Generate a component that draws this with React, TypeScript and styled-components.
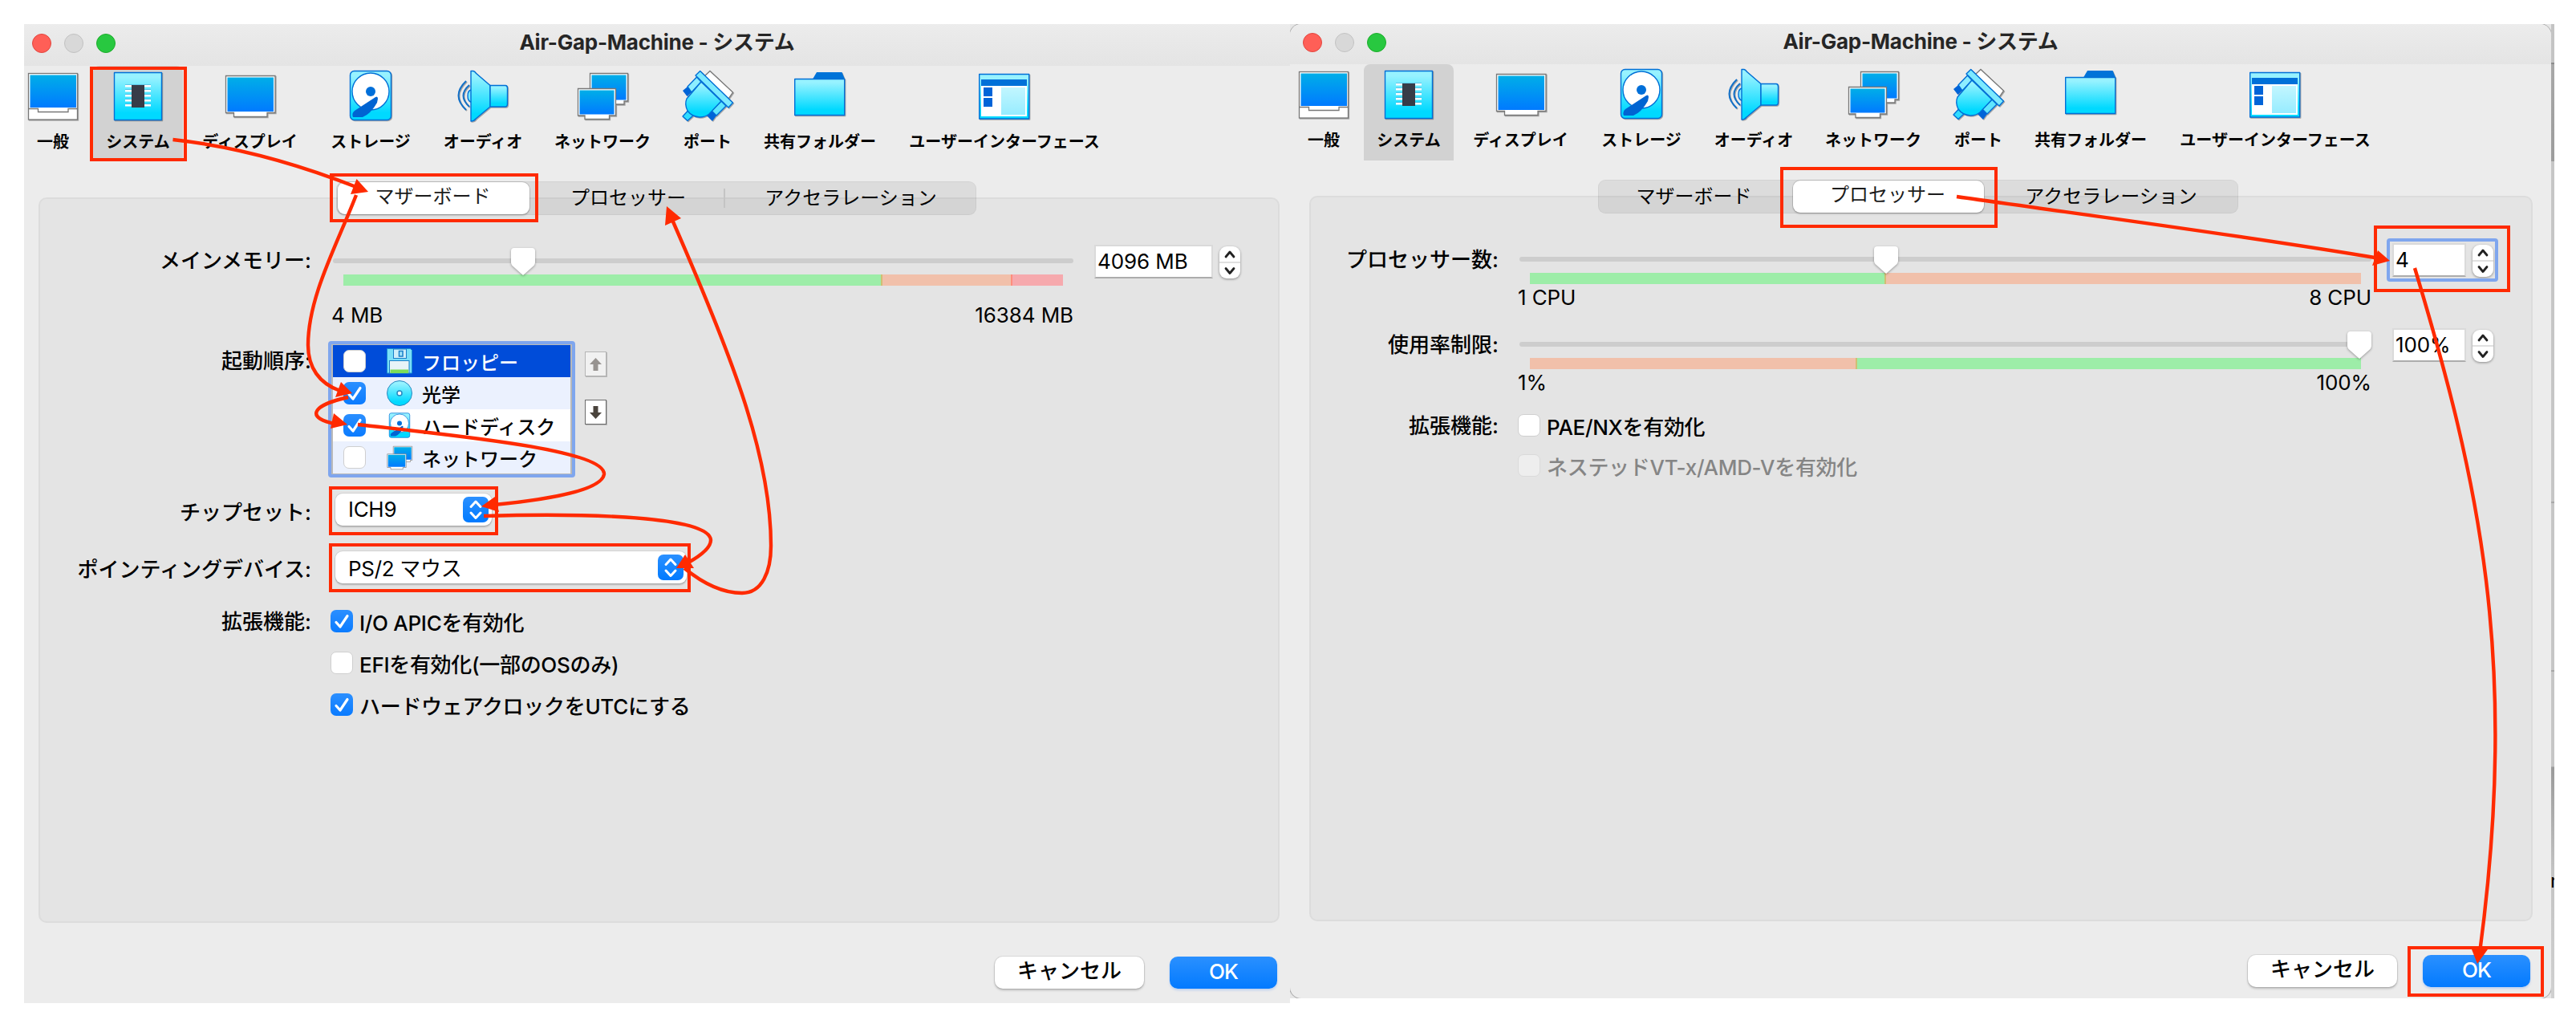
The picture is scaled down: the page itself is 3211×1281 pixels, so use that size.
import React from 'react';
import styled, { createGlobalStyle, css } from 'styled-components';

const Global = createGlobalStyle`
  * { box-sizing: border-box; }
  body { margin: 0; background: #fff; }
`;

const Page = styled.div`
  position: relative;
  width: 3211px;
  height: 1281px;
  padding: 30px 0 0 30px;
  display: flex;
  align-items: flex-start;
  overflow: hidden;
  background: #fff;
  color: #000;
  font-family: Inter, 'Noto Sans CJK JP', sans-serif;
  font-size: 26px;
`;

const Window = styled.section<{ w: number; h: number }>`
  width: ${p => p.w}px;
  height: ${p => p.h}px;
  background: #ececec;
  display: flex;
  flex-direction: column;
  overflow: hidden;
`;

const RoundWindow = styled(Window)`
  border-radius: 14px;
  box-shadow: 0 0 0 1px #a9a9a9;
`;

const WindowClip = styled.div`
  display: flex;
  width: 1576px;
  height: 1214px;
  overflow: hidden;
  background: #e6e6e6;
`;

const DesktopEdge = styled.div`
  position: relative;
  flex: none;
  width: 4px;
  height: 1214px;
  overflow: hidden;
  background: linear-gradient(
    #c4c4c4 0 48px, #8c8c8c 48px 50px, #a8a8a8 50px, #9c9c9c 171px,
    #c6c6c6 171px 595px, #a8a8a8 595px 597px, #c6c6c6 597px 805px, #a8a8a8 805px 807px,
    #c6c6c6 807px 925px, #9a9a9a 926px, #c4c4c4 1060px, #d0d0d0 100%
  );
`;

const EdgeLetter = styled.span`
  position: absolute;
  top: 1053px;
  left: -1px;
  font-size: 24px;
  line-height: 30px;
`;

const TitleBar = styled.header<{ h: number; pad: number }>`
  flex: none;
  display: grid;
  grid-template-columns: 1fr auto 1fr;
  align-items: center;
  height: ${p => p.h}px;
  padding: 0 ${p => p.pad}px 4px;
  background: linear-gradient(#ececec, #e4e4e4);
`;

const Lights = styled.div`
  display: flex;
  gap: 16px;
`;

const Light = styled.i<{ color: string; edge: string }>`
  width: 24px;
  height: 24px;
  border-radius: 50%;
  background: ${p => p.color};
  border: 1px solid ${p => p.edge};
`;

const Title = styled.h1`
  margin: 0;
  padding-bottom: 3px;
  font-size: 26px;
  line-height: 34px;
  font-weight: 700;
  letter-spacing: -0.25px;
  color: #262626;
  white-space: nowrap;
`;

const Toolbar = styled.nav<{ h: number; pad: number }>`
  flex: none;
  display: flex;
  gap: 8px;
  height: ${p => p.h}px;
  padding-left: ${p => p.pad}px;
`;

const Tool = styled.div<{ w: number; on?: boolean }>`
  flex: none;
  width: ${p => p.w}px;
  padding-top: 5px;
  display: flex;
  flex-direction: column;
  align-items: center;
  background: ${p => (p.on ? '#d2d2d2' : 'transparent')};
  border-radius: 8px 8px 0 0;
  &:first-child { padding-right: 6px; }
`;

const ToolIcon = styled.svg`
  width: 64px;
  height: 64px;
  overflow: visible;
  filter: drop-shadow(1px 1.5px 0.5px rgba(0, 0, 0, 0.3));
`;

const ToolLabel = styled.span`
  margin-top: 12px;
  font-size: 20px;
  font-weight: 700;
  line-height: 28px;
  white-space: nowrap;
`;

const Segments = styled.div<{ top: number; shift: number }>`
  flex: none;
  position: relative;
  z-index: 1;
  display: flex;
  width: 798px;
  height: 42px;
  margin: ${p => p.top}px 0 -22px ${p => p.shift}px;
  border-radius: 9px;
  background: rgba(0, 0, 0, 0.065);
  box-shadow: inset 0 0 0 1px rgba(0, 0, 0, 0.04);
`;

const Segment = styled.div<{ w: number; on?: boolean; divider?: boolean }>`
  width: ${p => p.w}px;
  margin: 1px 2px;
  padding-right: 2px;
  display: flex;
  align-items: center;
  justify-content: center;
  font-size: 24px;
  line-height: 36px;
  border-radius: 9px;
  ${p => p.on && css`
    background: #fff;
    box-shadow: 0 0 0 1px rgba(0, 0, 0, 0.13), 0 2px 2px rgba(0, 0, 0, 0.15);
    padding-bottom: 4px;
    color: #1c1c1c;
  `}
  ${p => p.divider && css`
    background: linear-gradient(#c4c4c4, #c4c4c4) right center / 2px 24px no-repeat;
    border-radius: 0;
  `}
`;

const Panel = styled.div<{ w: number; h: number; shift: number }>`
  flex: none;
  width: ${p => p.w}px;
  height: ${p => p.h}px;
  margin-left: ${p => p.shift}px;
  padding-top: 52px;
  border: 2px solid #dcdcdc;
  border-radius: 10px;
  background: #e4e4e4;
`;

const Row = styled.div<{ h: number }>`
  display: flex;
  align-items: flex-start;
  height: ${p => p.h}px;
`;

const Label = styled.label<{ w: number; line: number }>`
  flex: none;
  width: ${p => p.w}px;
  line-height: ${p => p.line}px;
  text-align: right;
  font-weight: 500;
  white-space: nowrap;
`;

const SliderBox = styled.div<{ w: number; shift: number }>`
  flex: none;
  width: ${p => p.w}px;
  margin-left: ${p => p.shift}px;
  padding-top: 22px;
`;

const Track = styled.div`
  position: relative;
  height: 6px;
  border-radius: 3px;
  background: #cdcdcd;
`;

const Thumb = styled.svg<{ x: number }>`
  position: absolute;
  left: ${p => p.x}px;
  top: -14px;
  width: 32px;
  height: 36px;
  overflow: visible;
  filter: drop-shadow(0 1px 1.5px rgba(0, 0, 0, 0.35));
`;

const Zones = styled.div`
  display: flex;
  height: 14px;
  margin: 14px 13px 0;
`;

const Zone = styled.i<{ w: number; color: string; mark?: string }>`
  width: ${p => p.w}px;
  background: ${p => p.color};
  ${p => p.mark && css`border-right: 2px solid ${p.mark};`}
`;

const Range = styled.div<{ gap: number }>`
  display: flex;
  justify-content: space-between;
  margin: ${p => p.gap}px 0 0 -2px;
  line-height: 32px;
  letter-spacing: -0.1px;
`;

const SpinWrap = styled.div<{ focus?: boolean }>`
  position: relative;
  display: flex;
  gap: 8px;
  margin: 5px 0 0 26px;
  ${p => p.focus && css`
    &::after {
      content: '';
      position: absolute;
      inset: -6px -6px -6px -7px;
      border: 4px solid #7fa6ee;
      border-radius: 4px;
    }
  `}
`;

const SpinField = styled.div<{ w: number }>`
  width: ${p => p.w}px;
  height: 42px;
  padding-left: 2px;
  line-height: 38px;
  letter-spacing: -0.1px;
  background: #fff;
  border: 2px solid #dadada;
  border-bottom-color: #acacac;
  white-space: nowrap;
`;

const Stepper = styled.svg`
  width: 26px;
  height: 40px;
  margin-top: 2px;
  overflow: visible;
  filter: drop-shadow(0 1px 1.5px rgba(0, 0, 0, 0.4));
`;

const BootList = styled.ul`
  width: 308px;
  height: 170px;
  margin: 0 0 0 21px;
  padding: 1px 2px 0;
  list-style: none;
  border: 4px solid #7fa6ee;
  border-radius: 4px;
  background: #b9b9b9;
`;

const BootItem = styled.li<{ bg: string; color?: string }>`
  display: flex;
  align-items: center;
  height: 40px;
  padding-left: 13px;
  background: ${p => p.bg};
  color: ${p => p.color || '#000'};
  font-size: 24px;
  font-weight: 500;
  white-space: nowrap;
`;

const SmallIcon = styled.svg`
  width: 32px;
  height: 32px;
  margin: 0 12px 0 26px;
  overflow: visible;
`;

const CheckBox = styled.span<{ on?: boolean; off?: boolean }>`
  flex: none;
  display: flex;
  align-items: center;
  justify-content: center;
  width: 28px;
  height: 28px;
  border-radius: 7px;
  background: ${p => (p.on ? 'linear-gradient(#2b8fff, #0a7bff)' : p.off ? '#eeeeee' : '#fff')};
  border: ${p => (p.on ? 'none' : '1.5px solid ' + (p.off ? '#dadada' : '#cfcfcf'))};
`;

const Moves = styled.div`
  display: flex;
  flex-direction: column;
  gap: 29px;
  margin: 13px 0 0 12px;
`;

const MoveButton = styled.button<{ dim?: boolean }>`
  width: 27px;
  height: 31px;
  padding: 0;
  display: grid;
  place-items: center;
  border: 1.5px solid ${p => (p.dim ? '#b5b5b5' : '#6c6c6c')};
  background: ${p => (p.dim ? '#f1f1f1' : '#fff')};
  box-shadow: 1px 1px 0 rgba(0, 0, 0, 0.2);
  color: ${p => (p.dim ? '#979390' : '#4a433c')};
`;

const Combo = styled.div<{ w: number }>`
  width: ${p => p.w}px;
  height: 40px;
  margin: 12px 0 0 30px;
  padding: 0 4px 2px 16px;
  display: flex;
  align-items: center;
  justify-content: space-between;
  border-radius: 9px;
  background: #fff;
  box-shadow: 0 0 0 1px rgba(0, 0, 0, 0.08), 0 2px 2px rgba(0, 0, 0, 0.2);
  letter-spacing: -0.3px;
  white-space: nowrap;
`;

const ComboKnob = styled.svg`
  width: 32px;
  height: 32px;
  margin-top: 2px;
`;

const Checks = styled.div`
  margin-left: 24px;
`;

const CheckRow = styled.div<{ h: number; off?: boolean }>`
  display: flex;
  align-items: center;
  gap: 8px;
  height: ${p => p.h}px;
  letter-spacing: -0.3px;
  font-weight: 450;
  color: ${p => (p.off ? '#858585' : '#000')};
  white-space: nowrap;
`;

const Footer = styled.footer<{ pad: number }>`
  flex: none;
  display: flex;
  justify-content: flex-end;
  gap: 32px;
  margin-top: 42px;
  padding-right: ${p => p.pad}px;
`;

const Button = styled.button<{ w: number; primary?: boolean }>`
  width: ${p => p.w}px;
  height: 40px;
  padding: 0 0 4px;
  border: none;
  border-radius: 10px;
  font: inherit;
  font-weight: 500;
  line-height: 36px;
  color: #000;
  background: #fff;
  box-shadow: 0 0 0 1px rgba(0, 0, 0, 0.08), 0 2px 3px rgba(0, 0, 0, 0.22);
  ${p => p.primary && css`
    color: #fff;
    padding-bottom: 3px;
    letter-spacing: -1px;
    background: linear-gradient(#2a90ff, #037aff);
    box-shadow: 0 2px 3px rgba(0, 100, 255, 0.2);
  `}
`;

const Markup = styled.svg`
  position: absolute;
  inset: 0;
  z-index: 5;
  width: 3211px;
  height: 1281px;
  pointer-events: none;
`;

const Defs = styled.svg`
  position: absolute;
`;

const Gradients = () => (
  <Defs width="0" height="0">
    <defs>
      <linearGradient id="aqua" x1="0" y1="0" x2="0" y2="1">
        <stop offset="0.1" stopColor="#97f2ff" />
        <stop offset="0.85" stopColor="#00d9ff" />
      </linearGradient>
      <linearGradient id="blue" x1="0" y1="0" x2="0" y2="1">
        <stop offset="0" stopColor="#00aee8" />
        <stop offset="1" stopColor="#007aff" />
      </linearGradient>
      <linearGradient id="pale" x1="0" y1="0" x2="0" y2="1">
        <stop offset="0" stopColor="#c2f6ff" />
        <stop offset="1" stopColor="#97ecff" />
      </linearGradient>
      <linearGradient id="knob" x1="0" y1="0" x2="0" y2="1">
        <stop offset="0" stopColor="#2b90ff" />
        <stop offset="1" stopColor="#007aff" />
      </linearGradient>
    </defs>
  </Defs>
);

const edge = { stroke: '#006fd6', strokeWidth: 1.4, strokeLinejoin: 'round' as const };
const gray = { stroke: '#777', strokeWidth: 1.3 };

const DiskArt = () => (
  <>
    <rect x="6.5" y="1.5" width="51" height="61" rx="5" fill="url(#aqua)" {...edge} />
    <circle cx="32" cy="27" r="23" fill="#fff" {...edge} />
    <circle cx="32" cy="27" r="6" fill="#006fd9" />
    <path d="M35 36Q41 31 41 36L40 41Q32 55 22 59H10Q8 54 12 51Z" fill="#0064d2" />
  </>
);

const NetworkArt = () => (
  <>
    <path d="M16.5 4.5H63.5V39H59V43H24V39H16.5Z" fill="#fff" {...gray} />
    <rect x="18.5" y="6.5" width="43" height="31" fill="url(#blue)" />
    <path d="M1.5 23.5H48.5V57H40.5V61.5H10V57H1.5Z" fill="#fff" {...gray} />
    <rect x="3.5" y="25.5" width="43" height="30" fill="url(#blue)" />
  </>
);

const art: Record<string, React.ReactNode> = {
  general: (
    <>
      <rect x="1.5" y="4.5" width="61" height="57.5" fill="#fff" {...gray} />
      <rect x="3.5" y="6.5" width="57.5" height="40.5" fill="url(#blue)" />
      <path d="M1.5 48.5H13.5V52.5H51V48.5H62.5" fill="none" {...gray} />
    </>
  ),
  system: (
    <>
      <rect x="2.5" y="3.5" width="59" height="59" fill="url(#aqua)" {...edge} />
      {[20, 26, 32, 38, 44].map(y => (
        <g key={y}>
          <rect x="16" y={y - 1} width="32" height="2.5" fill="#fff" />
          <rect x="16" y={y - 2} width="32" height="0.9" fill="#4aa6d6" opacity="0.6" />
        </g>
      ))}
      <rect x="24" y="19" width="16" height="28" fill="#373c48" />
    </>
  ),
  display: (
    <>
      <path d="M1.5 7.5H63V53.5H53V58.5H11.5V53.5H1.5Z" fill="#fff" {...gray} />
      <rect x="3.5" y="9.5" width="57.5" height="42.5" fill="url(#blue)" />
    </>
  ),
  storage: <DiskArt />,
  audio: (
    <>
      <path d="M17 25Q13 26 13 32.5Q13 39 17 40" fill="#7ceaff" {...edge} />
      <path d="M17 1.5H20Q22 2 23 4L41 19.5V46L23 61Q21 64 17 64Z" fill="url(#aqua)" {...edge} />
      <path d="M41 19.5H60Q62.5 19.5 62.5 23V42Q62.5 46 60 46H41Z" fill="url(#aqua)" {...edge} />
      <path d="M11 14Q-8 32 11 50M15 19Q0 32 15 46" fill="none" stroke="#1170c8" strokeWidth="2" />
    </>
  ),
  network: <NetworkArt />,
  port: (
    <>
      <path d="M35 1.5L63.5 28L58 36L28 8Z" fill="#fff" {...gray} />
      <path d="M7 21L18.5 9L24 15L12 28Z" fill="#8deeff" {...edge} />
      <path d="M1 26L7 21L12 28L6.5 33Z" fill="#0064d8" />
      <path d="M49 39L55 45L43 57L37 51Z" fill="#5fe5ff" {...edge} />
      <path d="M37 51L43 57L38 64L31 57Z" fill="#0064d8" />
      <path d="M7.5 51L14 57L7 63.5L1 58Z" fill="#2fdcff" {...edge} />
      <path d="M24 15L49 39L34 55Q29 59 22 59Q12 58 7 51Q3 43 6 36Z" fill="url(#aqua)" {...edge} />
      <path d="M22.7 1.5L63.5 41L58 47L17 7Z" fill="#7deaff" {...edge} />
    </>
  ),
  folder: (
    <>
      <path d="M23 11.5L28 3H59.5L63 11.5Z" fill="#0073d8" />
      <rect x="0.7" y="11.5" width="62" height="45" fill="url(#aqua)" {...edge} />
    </>
  ),
  ui: (
    <>
      <rect x="0.7" y="5.5" width="62" height="55.5" fill="url(#aqua)" {...edge} />
      <rect x="3" y="12" width="57" height="8" fill="#0070d8" />
      <rect x="3" y="20" width="57" height="38" fill="#fff" />
      <path d="M6 22H17V33H6ZM6 35H17V46H6Z" fill="#0064d8" />
      <rect x="28" y="22" width="30" height="34" fill="url(#pale)" />
    </>
  ),
  floppy: (
    <>
      <path d="M1 1H59L63 5V62H1Z" fill="#7adff8" stroke="#1b8fd2" strokeWidth="2" />
      <rect x="17" y="2" width="32" height="23" fill="#cfeefa" stroke="#1b7fc8" strokeWidth="2" />
      <rect x="31" y="7" width="9" height="13" fill="#a5e6fa" stroke="#1b7fc8" strokeWidth="3" />
      <rect x="7" y="31" width="49" height="31" fill="#e8f4f8" stroke="#1b7fc8" strokeWidth="2" />
      <rect x="9" y="53" width="45" height="9" fill="#7ddc58" />
    </>
  ),
  disc: (
    <>
      <circle cx="32" cy="32" r="31" fill="url(#aqua)" stroke="#2a88c0" strokeWidth="2" />
      <circle cx="32" cy="32" r="6" fill="#fff" stroke="#2a88c0" strokeWidth="3" />
    </>
  ),
};

const tools = [
  { id: 'general', label: '一般', w: 78 },
  { id: 'system', label: 'システム', w: 112 },
  { id: 'display', label: 'ディスプレイ', w: 151 },
  { id: 'storage', label: 'ストレージ', w: 134 },
  { id: 'audio', label: 'オーディオ', w: 130 },
  { id: 'network', label: 'ネットワーク', w: 152 },
  { id: 'port', label: 'ポート', w: 94 },
  { id: 'folder', label: '共有フォルダー', w: 170 },
  { id: 'ui', label: 'ユーザーインターフェース', w: 274 },
];

function Header({ h, pad }: { h: number; pad: number }) {
  return (
    <TitleBar h={h} pad={pad}>
      <Lights>
        <Light color="#ff5f57" edge="#e2463f" />
        <Light color="#d8d8d8" edge="#c2c2c2" />
        <Light color="#28c840" edge="#1dad2b" />
      </Lights>
      <Title>Air-Gap-Machine - システム</Title>
      <span />
    </TitleBar>
  );
}

function Tools({ h, pad }: { h: number; pad: number }) {
  return (
    <Toolbar h={h} pad={pad}>
      {tools.map(t => (
        <Tool key={t.id} w={t.w} on={t.id === 'system'}>
          <ToolIcon viewBox="0 0 64 64">{art[t.id]}</ToolIcon>
          <ToolLabel>{t.label}</ToolLabel>
        </Tool>
      ))}
    </Toolbar>
  );
}

function Check({ on, off }: { on?: boolean; off?: boolean }) {
  return (
    <CheckBox on={on} off={off}>
      {on && (
        <svg width="28" height="28" viewBox="0 0 28 28" fill="none">
          <path d="M7 15.5L12 21L21 7.5" stroke="#fff" strokeWidth="3.2" strokeLinecap="round" strokeLinejoin="round" />
        </svg>
      )}
    </CheckBox>
  );
}

type ZoneSpec = { w: number; color: string; mark?: string };

function Slider(p: { w: number; shift: number; thumb: number; zones: ZoneSpec[]; from: string; to: string; gap: number }) {
  return (
    <SliderBox w={p.w} shift={p.shift}>
      <Track>
        <Thumb x={p.thumb} viewBox="0 0 32 36">
          <path d="M5 1H27Q31 1 31 5V19Q31 21 29.5 23L16 35L2.5 23Q1 21 1 19V5Q1 1 5 1Z" fill="#fff" />
        </Thumb>
      </Track>
      <Zones>
        {p.zones.map((z, i) => <Zone key={i} {...z} />)}
      </Zones>
      <Range gap={p.gap}>
        <span>{p.from}</span>
        <span>{p.to}</span>
      </Range>
    </SliderBox>
  );
}

function Spin({ w, value, focus }: { w: number; value: string; focus?: boolean }) {
  return (
    <SpinWrap focus={focus}>
      <SpinField w={w}>{value}</SpinField>
      <Stepper viewBox="0 0 26 40" fill="none">
        <rect width="26" height="40" rx="9" fill="#fff" />
        <path d="M0 20H26" stroke="#d6d6d6" strokeWidth="1.5" />
        <path d="M8 13L13 7L18 13M8 27.5L13 33.5L18 27.5" stroke="#222" strokeWidth="2.8" strokeLinecap="round" strokeLinejoin="round" />
      </Stepper>
    </SpinWrap>
  );
}

function Select({ w, value }: { w: number; value: string }) {
  return (
    <Combo w={w}>
      <span>{value}</span>
      <ComboKnob viewBox="0 0 32 32" fill="none">
        <rect width="32" height="32" rx="7" fill="url(#knob)" />
        <path d="M10 12.5L16 6L22 12.5M10 20L16 26.5L22 20" stroke="#fff" strokeWidth="3" strokeLinecap="round" strokeLinejoin="round" />
      </ComboKnob>
    </Combo>
  );
}

const boot = [
  { icon: 'floppy', label: 'フロッピー', on: false, bg: '#004cd9', color: '#fff' },
  { icon: 'disc', label: '光学', on: true, bg: '#ebf1fe' },
  { icon: 'storage', label: 'ハードディスク', on: true, bg: '#ffffff' },
  { icon: 'network', label: 'ネットワーク', on: false, bg: '#ebf1fe' },
];

const GREEN = '#9deda8';
const ORANGE = '#f1c0aa';
const PINK = '#f6a9ad';
const MARK = '#d0be74';

const Arrow = ({ d, head }: { d: string; head: string }) => (
  <>
    <path d={d} fill="none" stroke="#ff2a00" strokeWidth="4.4" />
    <polygon points={head} fill="#ff2a00" />
  </>
);

const frames = [
  [114, 85, 117, 114], [413, 218, 256, 57], [412, 608, 207, 57], [412, 679, 447, 57],
  [2221, 210, 267, 72], [2961, 283, 166, 79], [3003, 1181, 166, 59],
];

export default function App() {
  return (
    <Page>
      <Global />
      <Gradients />

      <Window w={1578} h={1220}>
        <Header h={52} pad={10} />
        <Tools h={118} pad={0} />
        <Segments top={26} shift={389}>
          <Segment w={239} on>マザーボード</Segment>
          <Segment w={240} divider>プロセッサー</Segment>
          <Segment w={307}>アクセラレーション</Segment>
        </Segments>
        <Panel w={1547} h={904} shift={18}>
          <Row h={125}>
            <Label w={338} line={50}>メインメモリー:</Label>
            <Slider
              w={923}
              shift={27}
              thumb={221}
              gap={21}
              from="4 MB"
              to="16384 MB"
              zones={[{ w: 672, color: GREEN, mark: MARK }, { w: 162, color: ORANGE, mark: '#ff8d7c' }, { w: 63, color: PINK }]}
            />
            <Spin w={148} value="4096 MB" />
          </Row>
          <Row h={178}>
            <Label w={338} line={49}>起動順序:</Label>
            <BootList>
              {boot.map(b => (
                <BootItem key={b.icon} bg={b.bg} color={b.color}>
                  <Check on={b.on} />
                  <SmallIcon viewBox="0 0 64 64">{art[b.icon]}</SmallIcon>
                  {b.label}
                </BootItem>
              ))}
            </BootList>
            <Moves>
              <MoveButton dim>
                <svg width="17" height="18" viewBox="0 0 17 18" fill="currentColor"><path d="M8.5 1L16 9H11.5V17H5.5V9H1Z" /></svg>
              </MoveButton>
              <MoveButton>
                <svg width="17" height="18" viewBox="0 0 17 18" fill="currentColor"><path d="M8.5 17L16 9H11.5V1H5.5V9H1Z" /></svg>
              </MoveButton>
            </Moves>
          </Row>
          <Row h={72}>
            <Label w={338} line={71}>チップセット:</Label>
            <Select w={195} value="ICH9" />
          </Row>
          <Row h={73}>
            <Label w={338} line={69}>ポインティングデバイス:</Label>
            <Select w={438} value="PS/2 マウス" />
          </Row>
          <Row h={156}>
            <Label w={338} line={54}>拡張機能:</Label>
            <Checks>
              <CheckRow h={52}><Check on />I/O APICを有効化</CheckRow>
              <CheckRow h={52}><Check />EFIを有効化(一部のOSのみ)</CheckRow>
              <CheckRow h={52}><Check on />ハードウェアクロックをUTCにする</CheckRow>
            </Checks>
          </Row>
        </Panel>
        <Footer pad={16}>
          <Button w={186}>キャンセル</Button>
          <Button w={134} primary>OK</Button>
        </Footer>
      </Window>

      <WindowClip>
        <RoundWindow w={1572} h={1214}>
          <Header h={50} pad={16} />
          <Tools h={120} pad={6} />
          <Segments top={24} shift={384}>
            <Segment w={237}>マザーボード</Segment>
            <Segment w={238} on>プロセッサー</Segment>
            <Segment w={311}>アクセラレーション</Segment>
          </Segments>
          <Panel w={1525} h={904} shift={24}>
            <Row h={106}>
              <Label w={234} line={51}>プロセッサー数:</Label>
              <Slider
                w={1062}
                shift={26}
                thumb={441}
                gap={1}
                from="1 CPU"
                to="8 CPU"
                zones={[{ w: 444, color: GREEN, mark: MARK }, { w: 592, color: ORANGE }]}
              />
              <Spin w={92} value="4" focus />
            </Row>
            <Row h={100}>
              <Label w={234} line={52}>使用率制限:</Label>
              <Slider
                w={1062}
                shift={26}
                thumb={1031}
                gap={1}
                from="1%"
                to="100%"
                zones={[{ w: 408, color: ORANGE, mark: MARK }, { w: 628, color: GREEN }]}
              />
              <Spin w={92} value="100%" />
            </Row>
            <Row h={102}>
              <Label w={234} line={53}>拡張機能:</Label>
              <Checks>
                <CheckRow h={52}><Check />PAE/NXを有効化</CheckRow>
                <CheckRow h={48} off><Check off />ネステッドVT-x/AMD-Vを有効化</CheckRow>
              </Checks>
            </Row>
          </Panel>
          <Footer pad={26}>
            <Button w={186}>キャンセル</Button>
            <Button w={134} primary>OK</Button>
          </Footer>
        </RoundWindow>
        <DesktopEdge>
          <EdgeLetter>r</EdgeLetter>
        </DesktopEdge>
      </WindowClip>

      <Markup viewBox="0 0 3211 1281">
        {frames.map(([x, y, w, h]) => (
          <rect key={`${x}-${y}`} x={x} y={y} width={w} height={h} fill="none" stroke="#ff2a00" strokeWidth="4" />
        ))}
        <Arrow d="M215.5 174C290 182 370 204 444 233" head="459,239 444.5,223 437,242" />
        <Arrow d="M444 243C420 305 384 370 384 430C384 458 398 478 424 487" head="439,490 425,476 418,495" />
        <Arrow d="M434 495C384 506 384 522 418 528" head="433,529 416,515 412,534" />
        <Arrow d="M446 529C560 542 755 560 753 591C750 610 690 622 616 629" head="600,631 617,619 622,638" />
        <Arrow d="M603 643C700 640 884 640 886 673C886 682 874 692 858 701" head="843,708 854,691 865,708" />
        <Arrow d="M853 708C875 726 900 739 925 739C950 739 961 712 961 680C961 570 915 450 838 274" head="831,257 849,272 829,281" />
        <Arrow d="M2439 245C2600 268 2800 294 2966 322" head="2979,325 2964,312 2957,331" />
        <Arrow d="M3010 334C3090 600 3140 820 3091 1187" head="3088,1201 3081,1183 3101,1183" />
      </Markup>
    </Page>
  );
}
